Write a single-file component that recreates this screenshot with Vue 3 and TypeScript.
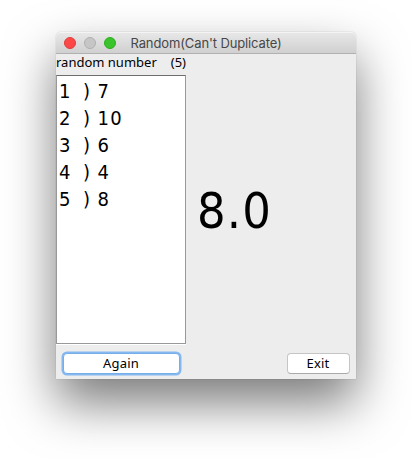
<script setup lang="ts">
import { ref } from 'vue'

const results = ref<number[]>([7, 10, 6, 4, 8])
const current = ref<number>(8)
const lights: string[] = ['close', 'minimize', 'maximize']
</script>

<template>
  <main class="desktop">
    <section class="window">
      <header class="titlebar">
        <div class="lights">
          <i v-for="light in lights" :key="light" class="light" :class="light"></i>
        </div>
        <h1 class="title">Random(Can't Duplicate)</h1>
      </header>
      <div class="caption">
        <span class="caption-name">random number</span>
        <span class="caption-count">({{ results.length }})</span>
      </div>
      <div class="content">
        <ol class="results">
          <li v-for="(value, index) in results" :key="index" class="result">
            <span>{{ index + 1 }}</span><span>)</span><span>{{ value }}</span>
          </li>
        </ol>
        <output class="current">{{ current.toFixed(1) }}</output>
      </div>
      <footer class="actions">
        <button class="button again" type="button">Again</button>
        <button class="button exit" type="button">Exit</button>
      </footer>
    </section>
  </main>
</template>

<style>
body {
  background: #fff;
}
</style>

<style scoped>
.desktop {
  box-sizing: border-box;
  width: 412px;
  height: 459px;
  padding: 32px 56px 80px;
  overflow: hidden;
}
.window {
  display: flex;
  flex-direction: column;
  width: 300px;
  height: 347px;
  border-radius: 5px 5px 0 0;
  background: #ededed;
  box-shadow: 0 0 1px rgba(0, 0, 0, 0.4), 0 24px 50px rgba(0, 0, 0, 0.52);
  color: #000;
  font-family: "Noto Sans", sans-serif;
}
.titlebar {
  box-sizing: border-box;
  display: flex;
  align-items: center;
  height: 22px;
  padding-left: 8px;
  border-bottom: 1px solid #b1b1b1;
  border-radius: 5px 5px 0 0;
  background: linear-gradient(#e8e8e8, #d0d0d0);
  box-shadow: inset 0 1px #f4f4f4;
}
.lights {
  display: flex;
  gap: 8px;
}
.light {
  box-sizing: border-box;
  width: 12px;
  height: 12px;
  border: 1px solid;
  border-radius: 50%;
}
.close {
  border-color: #df3d3a;
  background: #fc4948;
}
.minimize {
  border-color: #b0b0b0;
  background: #c6c6c6;
}
.maximize {
  border-color: #2dae20;
  background: #38c42a;
}
.title {
  margin: 0 0 0 14.5px;
  color: #474747;
  font: 400 13px/20px Inter, sans-serif;
  letter-spacing: -0.12px;
  white-space: nowrap;
}
.caption {
  display: flex;
  justify-content: space-between;
  width: 130px;
  height: 21px;
  font-size: 13px;
  line-height: 17px;
  white-space: nowrap;
}
.content {
  display: flex;
  height: 269px;
}
.results {
  box-sizing: border-box;
  width: 130px;
  margin: 0;
  padding: 2px 0 0 2px;
  border: 1px solid #999;
  border-top-color: #6e6e6e;
  background: #fff;
  box-shadow: 0 1px #fff;
  list-style: none;
}
.result {
  display: grid;
  grid-template-columns: 24px 14.5px 1fr;
  height: 27px;
  font-family: "DejaVu Sans Condensed", "DejaVu Sans", sans-serif;
  font-stretch: condensed;
  font-size: 20px;
  line-height: 27px;
  letter-spacing: 1.2px;
}
.current {
  align-self: center;
  margin-left: 11px;
  padding-top: 2px;
  font-family: "DejaVu Sans Condensed", "DejaVu Sans", sans-serif;
  font-stretch: condensed;
  font-size: 50px;
  line-height: 58px;
  letter-spacing: 1.2px;
}
.actions {
  display: flex;
  justify-content: space-between;
  align-items: flex-start;
  padding: 9px 6px 0 7px;
}
.button {
  box-sizing: border-box;
  height: 21px;
  padding: 0 1px 1px 0;
  border: 1px solid #c5c5c5;
  border-bottom-color: #aaa;
  border-radius: 4px;
  background: #fff;
  color: #000;
  font: 13px/18px "Noto Sans", sans-serif;
  letter-spacing: 0.2px;
}
.again {
  width: 117px;
  border-color: #76aeea;
  box-shadow: 0 0 0 1.5px #85b8f0;
}
.exit {
  width: 63px;
}
</style>
